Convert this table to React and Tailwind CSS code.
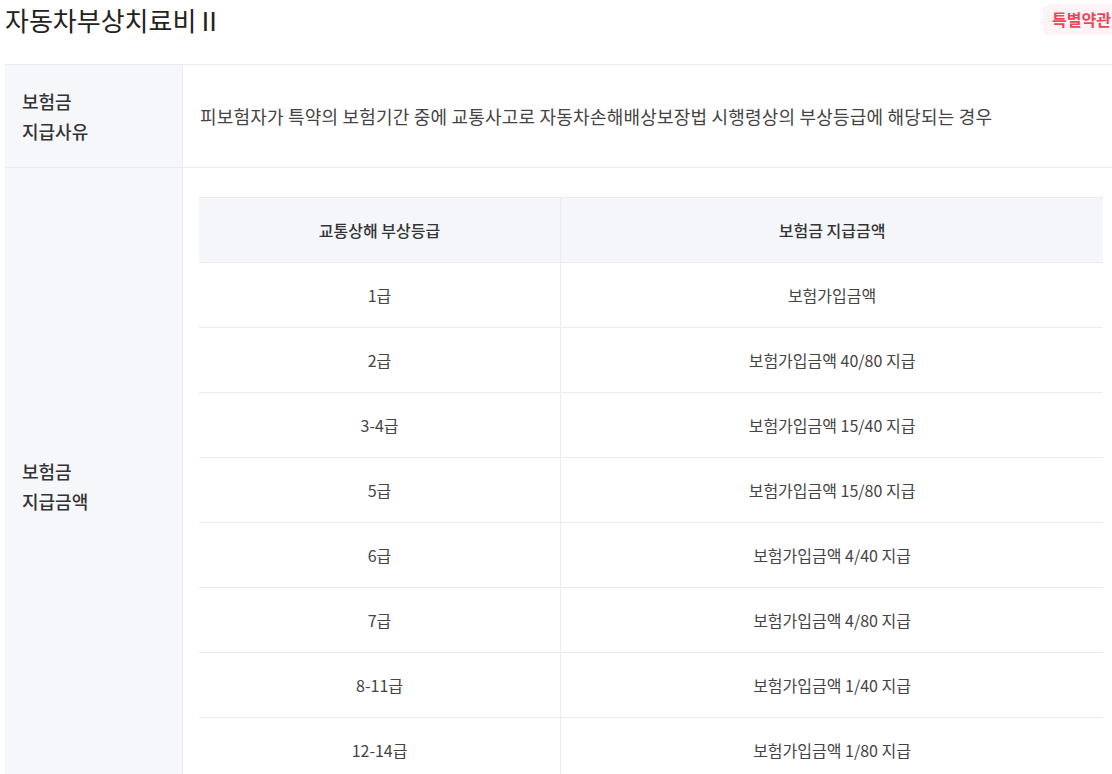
import React from "react";

const rows = [
  ["1급", "보험가입금액"],
  ["2급", "보험가입금액 40/80 지급"],
  ["3-4급", "보험가입금액 15/40 지급"],
  ["5급", "보험가입금액 15/80 지급"],
  ["6급", "보험가입금액 4/40 지급"],
  ["7급", "보험가입금액 4/80 지급"],
  ["8-11급", "보험가입금액 1/40 지급"],
  ["12-14급", "보험가입금액 1/80 지급"],
];

export default function App() {
  return (
    <div
      className="w-[1112px] h-[774px] overflow-hidden bg-white"
      style={{ fontFamily: '"Noto Sans CJK KR", "Noto Sans", sans-serif' }}
    >
      <div className="w-[1114px] ml-[5px]">
        <div className="flex items-center justify-between h-[40px] mb-[24px]">
          <h1 className="text-[26px] leading-[40px] text-[#222] font-normal">자동차부상치료비Ⅱ</h1>
          <span className="h-[31px] pl-[9px] pr-[8px] rounded-[6px] bg-[#fff4f5] text-[#f0445a] text-[16px] font-bold leading-[31px] mt-[-2px]">
            특별약관
          </span>
        </div>
        <div className="border-t border-[#ebebf0]">
          <div className="flex border-b border-[#ebebf0]">
            <div className="w-[178px] shrink-0 bg-[#f6f7fb] border-r border-[#ebebf0] px-[17px] py-[21px] flex items-center">
              <div className="text-[18px] leading-[30px] font-medium text-[#333]">
                보험금
                <br />
                지급사유
              </div>
            </div>
            <div className="flex-1 px-[17px] flex items-center text-[18px] tracking-[0.2px] text-[#444]">
              피보험자가 특약의 보험기간 중에 교통사고로 자동차손해배상보장법 시행령상의 부상등급에 해당되는 경우
            </div>
          </div>
          <div className="flex border-b border-[#ebebf0]">
            <div className="w-[178px] shrink-0 bg-[#f6f7fb] border-r border-[#ebebf0] px-[17px] flex items-center">
              <div className="text-[18px] leading-[30px] font-medium text-[#333] mt-[-10px]">
                보험금
                <br />
                지급금액
              </div>
            </div>
            <div className="flex-1 px-[16px] pt-[29px] pb-[30px]">
              <table className="w-full border-collapse text-[16px]">
                <thead>
                  <tr className="bg-[#f5f6fa] border-t border-b border-[#ebebf0]">
                    <th className="w-[40%] h-[65px] font-medium text-[#333] border-r border-[#ebebf0]">
                      교통상해 부상등급
                    </th>
                    <th className="h-[65px] font-medium text-[#333]">보험금 지급금액</th>
                  </tr>
                </thead>
                <tbody>
                  {rows.map(([a, b]) => (
                    <tr key={a} className="border-b border-[#ebebf0]">
                      <td className="h-[65px] text-center text-[#444] border-r border-[#ebebf0]">{a}</td>
                      <td className="h-[65px] text-center text-[#444]">{b}</td>
                    </tr>
                  ))}
                </tbody>
              </table>
            </div>
          </div>
        </div>
      </div>
    </div>
  );
}
